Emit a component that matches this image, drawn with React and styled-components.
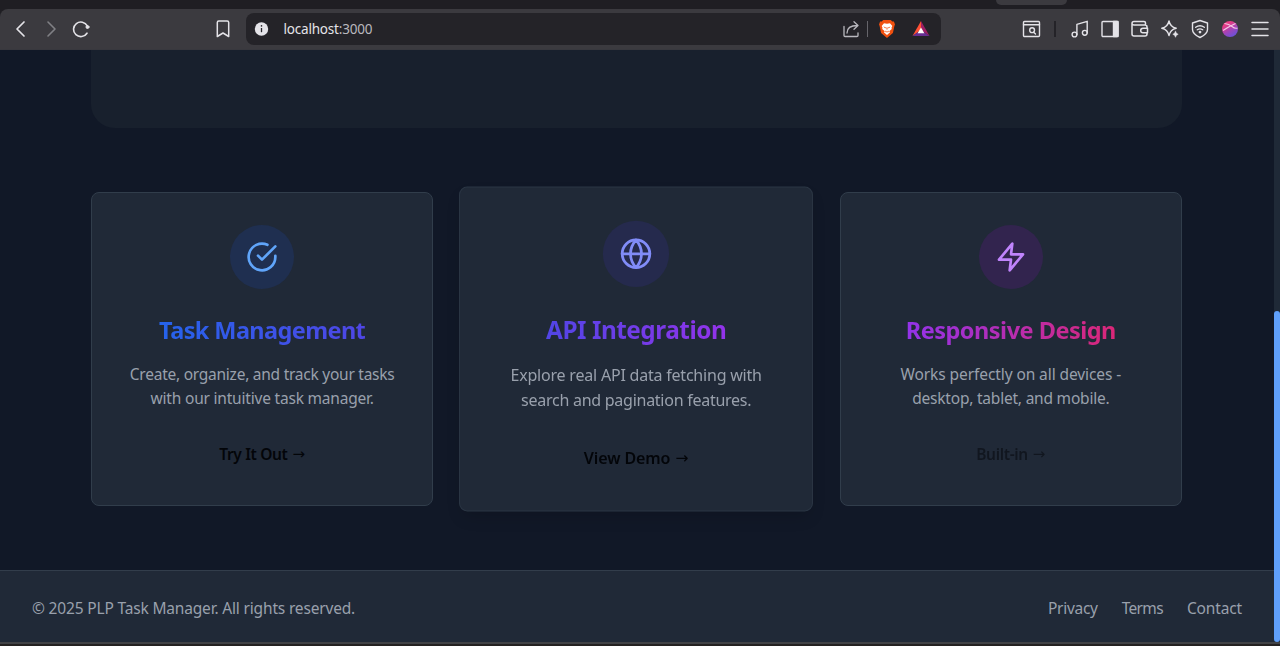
import React from 'react';
import styled, { createGlobalStyle } from 'styled-components';

const GlobalStyle = createGlobalStyle`
  * { box-sizing: border-box; }
  body { margin: 0; background: #1f1e23; overflow: hidden; }
`;

const Window = styled.div`
  display: flex;
  flex-direction: column;
  width: 1280px;
  height: 646px;
  overflow: hidden;
  background: #1f1e23;
  font-family: "Noto Sans", "Open Sans", sans-serif;
`;

const TabStrip = styled.div`
  height: 9px;
  flex: none;
  padding-left: 996px;
`;

const ActiveTab = styled.div`
  width: 71px;
  height: 5px;
  background: #3b3a3f;
  border-radius: 0 0 6px 6px;
`;

const Toolbar = styled.header`
  display: flex;
  align-items: center;
  height: 41px;
  flex: none;
  padding: 0 10px 1px 11px;
  background: #3b3a3f;
  border-radius: 8px 8px 0 0;
  border-bottom: 1px solid #38383e;
`;

const NavButtons = styled.div`
  display: flex;
  gap: 10px;
  width: 202px;
`;

const ToolButton = styled.button`
  display: grid;
  place-items: center;
  width: 20px;
  height: 20px;
  padding: 0;
  border: 0;
  background: none;
  color: ${(p) => p.$color || '#e4e3e8'};
`;

const AddressBar = styled.div`
  display: flex;
  align-items: center;
  width: 695px;
  height: 32px;
  margin-left: 13px;
  padding: 0 10px 0 6px;
  border-radius: 8px;
  background: #242328;
`;

const Url = styled.span`
  flex: 1;
  margin-left: 11.5px;
  font-size: 13.5px;
  line-height: 20px;
  letter-spacing: -0.2px;
  color: #e4e3e8;
  span { color: #b9b8be; }
`;

const Divider = styled.span`
  width: ${(p) => p.$width || 1}px;
  height: 16px;
  margin: 0 ${(p) => p.$after}px 0 ${(p) => p.$before}px;
  background: ${(p) => p.$color};
`;

const AddressActions = styled.div`
  display: flex;
  align-items: center;
  gap: 14px;
`;

const Extensions = styled.div`
  display: flex;
  align-items: center;
  gap: 10px;
  margin-left: auto;
`;

const Viewport = styled.div`
  display: flex;
  height: 592px;
  flex: none;
  background: #111827;
`;

const Page = styled.div`
  display: flex;
  flex-direction: column;
  width: 1274px;
`;

const Main = styled.main`
  flex: 1;
  padding: 0 92px 0 91px;
`;

const Hero = styled.section`
  height: 78px;
  border-radius: 0 0 24px 24px;
  background: #18202d;
`;

const CardGrid = styled.section`
  display: grid;
  grid-template-columns: repeat(3, 1fr);
  gap: 32px;
  margin-top: 64px;
`;

const Card = styled.article`
  display: flex;
  flex-direction: column;
  align-items: center;
  height: 314px;
  padding: 32px;
  border: 1px solid ${(p) => (p.$raised ? '#2b3644' : '#313d4b')};
  border-radius: 8px;
  background: #202937;
  text-align: center;
  ${(p) => p.$raised && 'transform: scale(1.035); box-shadow: 0 8px 16px -5px rgba(0, 0, 0, 0.18);'}
`;

const IconDisc = styled.div`
  display: grid;
  place-items: center;
  width: 64px;
  height: 64px;
  border-radius: 50%;
  background: ${(p) => p.$bg};
  color: ${(p) => p.$fg};
`;

const CardTitle = styled.h3`
  margin: 25px 0 0;
  font-size: 23.5px;
  font-weight: 700;
  line-height: 32px;
  white-space: nowrap;
  letter-spacing: ${(p) => p.$tracking}px;
  color: transparent;
  background: linear-gradient(90deg, ${(p) => p.$from}, ${(p) => p.$to});
  background-clip: text;
  -webkit-background-clip: text;
`;

const CardText = styled.p`
  margin: 16px 0 0;
  font-size: 15.5px;
  line-height: 24px;
  color: #99a0ac;
  white-space: nowrap;
`;

const Line = styled.span`
  display: block;
  letter-spacing: ${(p) => p.$tracking}px;
`;

const CardLink = styled.a`
  display: flex;
  align-items: center;
  gap: 5px;
  margin-top: 32px;
  font-size: 15.5px;
  font-weight: 600;
  line-height: 24px;
  white-space: nowrap;
  letter-spacing: ${(p) => p.$tracking}px;
  color: #030509;
  opacity: ${(p) => (p.$muted ? 0.5 : 1)};
`;

const Arrow = styled.span`
  font-family: "DejaVu Sans", sans-serif;
  font-size: 15px;
  font-weight: 400;
  letter-spacing: 0;
`;

const Footer = styled.footer`
  display: flex;
  justify-content: space-between;
  align-items: center;
  height: 72px;
  padding: 2px 32px 0;
  border-top: 1px solid #323d4b;
  background: #202937;
  font-size: 15.5px;
  line-height: 24px;
  color: #99a0ac;
`;

const FooterText = styled.span`
  letter-spacing: ${(p) => p.$tracking}px;
`;

const FooterLinks = styled.nav`
  display: flex;
  gap: 24px;
`;

const ScrollTrack = styled.div`
  display: flex;
  align-items: flex-end;
  width: 6px;
  background: #1f2937;
`;

const ScrollThumb = styled.div`
  width: 6px;
  height: 331px;
  border-radius: 3px;
  background: #5f9ffa;
`;

const WindowEdge = styled.div`
  flex: 1;
  border-top: 2px solid #414245;
  background: #242121;
`;

const Icon = ({ size = 20, width = 1.4, box = 20, children }) => (
  <svg
    width={size}
    height={size}
    viewBox={`0 0 ${box} ${box}`}
    fill="none"
    stroke="currentColor"
    strokeWidth={width}
    strokeLinecap="round"
    strokeLinejoin="round"
  >
    {children}
  </svg>
);

const BraveLogo = () => (
  <svg width="20" height="20" viewBox="0 0 20 20">
    <path d="M6.200 1h7.600l1.500 1.600 1.600-.1 1.100 3-.6 1.400-1.500 7.200L10 19l-5.900-4.900L2.600 6.900 2 5.500l1.100-3 1.600.1z" fill="#f0500f" />
    <path d="M7 4.200l3 .6 3-.6 2.300 2.900-.8 1.700.3 1.100-2.600 2.400.9 1-3.100 2.600-3.100-2.600.9-1-2.600-2.400.3-1.100-.8-1.700z" fill="#fff" />
    <path d="M6.300 7.500l2.500.8-.4 1.300zM13.700 7.500l-2.500.8.4 1.300zM9.300 8.500l.7 3.200.7-3.200zM8 11.600l2 1.100 2-1.100-.7 1.600H8.700z" fill="#f0500f" />
  </svg>
);

const BatLogo = () => (
  <svg width="20" height="20" viewBox="0 0 20 20">
    <path d="M10 2L1.500 17 10 11z" fill="#ff5034" />
    <path d="M10 2l8.500 15L10 11z" fill="#9e1f63" />
    <path d="M1.500 17h17L10 11z" fill="#662d91" />
    <path d="M10 8.500L6.600 14.300h6.800z" fill="#fff" />
  </svg>
);

const Avatar = () => (
  <svg width="20" height="20" viewBox="0 0 20 20">
    <defs>
      <linearGradient id="avatar" x1="0.2" y1="0" x2="0.8" y2="1">
        <stop offset="0.2" stopColor="#e63b82" />
        <stop offset="0.6" stopColor="#9b45bd" />
        <stop offset="1" stopColor="#6254dd" />
      </linearGradient>
    </defs>
    <circle cx="10" cy="10" r="8" fill="url(#avatar)" />
    <path d="M3 11.500Q8 8 15.500 4.500M4.500 4.500Q9 5 12 7.500T17.500 9" fill="none" stroke="#f6c7e4" strokeWidth="1.100" />
  </svg>
);

const CheckIcon = () => (
  <Icon size={32} box={24} width={2}>
    <path d="M22 11.080V12a10 10 0 1 1-5.930-9.140" />
    <path d="M22 4L12 14.010l-3-3" />
  </Icon>
);

const GlobeIcon = () => (
  <Icon size={32} box={24} width={2}>
    <circle cx="12" cy="12" r="10" />
    <path d="M2 12h20" />
    <path d="M12 2a15.300 15.300 0 0 1 4 10 15.300 15.300 0 0 1-4 10 15.300 15.300 0 0 1-4-10 15.300 15.300 0 0 1 4-10z" />
  </Icon>
);

const BoltIcon = () => (
  <Icon size={32} box={24} width={2}>
    <path d="M13 2L3 14h9l-1 8 10-12h-9z" />
  </Icon>
);

const cards = [
  {
    title: 'Task Management', titleTracking: -0.6, from: '#2563eb', to: '#4f46e5',
    lines: [['Create, organize, and track your tasks', -0.25], ['with our intuitive task manager.', -0.2]],
    link: 'Try It Out', linkTracking: -0.35, bg: '#1f2f50', fg: '#60a5fa', icon: <CheckIcon />,
  },
  {
    title: 'API Integration', titleTracking: -0.45, from: '#5145e5', to: '#9333ea', raised: true,
    lines: [['Explore real API data fetching with', -0.22], ['search and pagination features.', -0.27]],
    link: 'View Demo', linkTracking: -0.1, bg: '#252a4d', fg: '#818cf8', icon: <GlobeIcon />,
  },
  {
    title: 'Responsive Design', titleTracking: -0.5, from: '#9333ea', to: '#db2777',
    lines: [['Works perfectly on all devices -', -0.09], ['desktop, tablet, and mobile.', -0.21]],
    link: 'Built-in', linkTracking: -0.35, muted: true, bg: '#32244e', fg: '#c084fc', icon: <BoltIcon />,
  },
];

const FeatureCard = ({ card }) => (
  <Card $raised={card.raised}>
    <IconDisc $bg={card.bg} $fg={card.fg}>{card.icon}</IconDisc>
    <CardTitle $from={card.from} $to={card.to} $tracking={card.titleTracking}>{card.title}</CardTitle>
    <CardText>
      {card.lines.map(([text, tracking]) => (
        <Line key={text} $tracking={tracking}>{text}</Line>
      ))}
    </CardText>
    <CardLink $tracking={card.linkTracking} $muted={card.muted}>
      {card.link} <Arrow>→</Arrow>
    </CardLink>
  </Card>
);

const BrowserToolbar = () => (
  <Toolbar>
    <NavButtons>
      <ToolButton aria-label="Back"><Icon width={1.7}><path d="M13 3l-7 7 7 7" /></Icon></ToolButton>
      <ToolButton aria-label="Forward" $color="#808085"><Icon width={1.6}><path d="M7 3l7 7-7 7" /></Icon></ToolButton>
      <ToolButton aria-label="Reload">
        <Icon width={1.6}>
          <path d="M16 14.200A7.300 7.300 0 1 1 16.300 6.900" />
          <circle cx="16.500" cy="8" r="1.500" fill="currentColor" strokeWidth="1" />
        </Icon>
      </ToolButton>
    </NavButtons>
    <ToolButton aria-label="Bookmark"><Icon width={1.5}><path d="M4.300 3.500Q4.300 2 5.800 2h8.400q1.500 0 1.500 1.500V17.500L10 14l-5.700 3.500z" /></Icon></ToolButton>
    <AddressBar>
      <ToolButton aria-label="Site information">
        <svg width="20" height="20" viewBox="0 0 20 20">
          <circle cx="9.500" cy="10" r="6.700" fill="#e4e3e8" />
          <path d="M9.500 9v4.200" stroke="#242328" strokeWidth="1.300" />
          <circle cx="9.500" cy="6.900" r=".8" fill="#242328" />
        </svg>
      </ToolButton>
      <Url>localhost<span>:3000</span></Url>
      <ToolButton aria-label="Share" $color="#b9b8be">
        <Icon width={1.3}><path d="M3 7.500v9q0 1 1 1h12q1 0 1-1V14M6 14q0-7.500 10.500-7.500M13 2.800l4 3.700-4 3.700" /></Icon>
      </ToolButton>
      <Divider $before={6} $after={9} $color="#66656b" />
      <AddressActions>
        <ToolButton aria-label="Shields"><BraveLogo /></ToolButton>
        <ToolButton aria-label="Rewards"><BatLogo /></ToolButton>
      </AddressActions>
    </AddressBar>
    <Extensions>
      <ToolButton aria-label="Search tabs">
        <Icon width={1.4}><rect x="2.500" y="2.500" width="16" height="15" rx="1" /><path d="M2.500 5.800h16M12.700 13.200l1.800 1.700" /><circle cx="11.100" cy="11.200" r="2.400" /></Icon>
      </ToolButton>
      <Divider $width={2} $before={3} $after={4} $color="#242328" />
      <ToolButton aria-label="Playlist">
        <Icon width={1.4}><circle cx="4.500" cy="15.500" r="2.400" /><circle cx="14.800" cy="13.800" r="2.400" /><path d="M6.900 15.500V5.300l10.300-3v11.500" /></Icon>
      </ToolButton>
      <ToolButton aria-label="Sidebar">
        <Icon width={1.4}><rect x="2" y="2.500" width="16" height="15" rx="1" /><path d="M13.500 2.500H18v15h-4.500z" fill="currentColor" /></Icon>
      </ToolButton>
      <ToolButton aria-label="Wallet">
        <Icon width={1.5}><path d="M15.500 6V4q0-1.500-1.500-1.500H4Q2 2.500 2 4.500V15q0 2 2 2h11q2 0 2-2V8q0-2-2-2H4Q2 6 2 4.500" /><path d="M17.500 9.200H13a2.300 2.300 0 0 0 0 4.600h4.500z" fill="#3b3a3f" /></Icon>
      </ToolButton>
      <ToolButton aria-label="Leo">
        <Icon width={1.4}><path d="M9 2q1.300 6 7.200 7.300-5.900 1.300-7.200 7.300-1.300-6-7.200-7.300Q7.700 8 9 2z" /><path d="M15.500 12.300q.5 2.500 2.700 3-2.200.5-2.700 3-.5-2.500-2.700-3 2.200-.5 2.700-3z" fill="currentColor" strokeWidth="0.500" /></Icon>
      </ToolButton>
      <ToolButton aria-label="VPN">
        <Icon width={1.4}><path d="M10 1.500l7.500 2.500v6.500q0 4.500-7.500 8-7.500-3.500-7.500-8V4z" /><path d="M5.700 8.300q4.300-3 8.600 0M7.300 10.800q2.700-1.900 5.400 0" /><circle cx="10" cy="13.100" r=".7" fill="currentColor" /></Icon>
      </ToolButton>
      <ToolButton aria-label="Profile"><Avatar /></ToolButton>
      <ToolButton aria-label="Menu"><Icon width={1.5}><path d="M2 3.500h16M2 10h16M2 16.500h16" /></Icon></ToolButton>
    </Extensions>
  </Toolbar>
);

export default function App() {
  return (
    <Window>
      <GlobalStyle />
      <TabStrip><ActiveTab /></TabStrip>
      <BrowserToolbar />
      <Viewport>
        <Page>
          <Main>
            <Hero />
            <CardGrid>
              {cards.map((card) => <FeatureCard key={card.title} card={card} />)}
            </CardGrid>
          </Main>
          <Footer>
            <FooterText $tracking={-0.17}>© 2025 PLP Task Manager. All rights reserved.</FooterText>
            <FooterLinks>
              <FooterText $tracking={-0.3}>Privacy</FooterText>
              <FooterText $tracking={-0.65}>Terms</FooterText>
              <FooterText $tracking={-0.15}>Contact</FooterText>
            </FooterLinks>
          </Footer>
        </Page>
        <ScrollTrack><ScrollThumb /></ScrollTrack>
      </Viewport>
      <WindowEdge />
    </Window>
  );
}
